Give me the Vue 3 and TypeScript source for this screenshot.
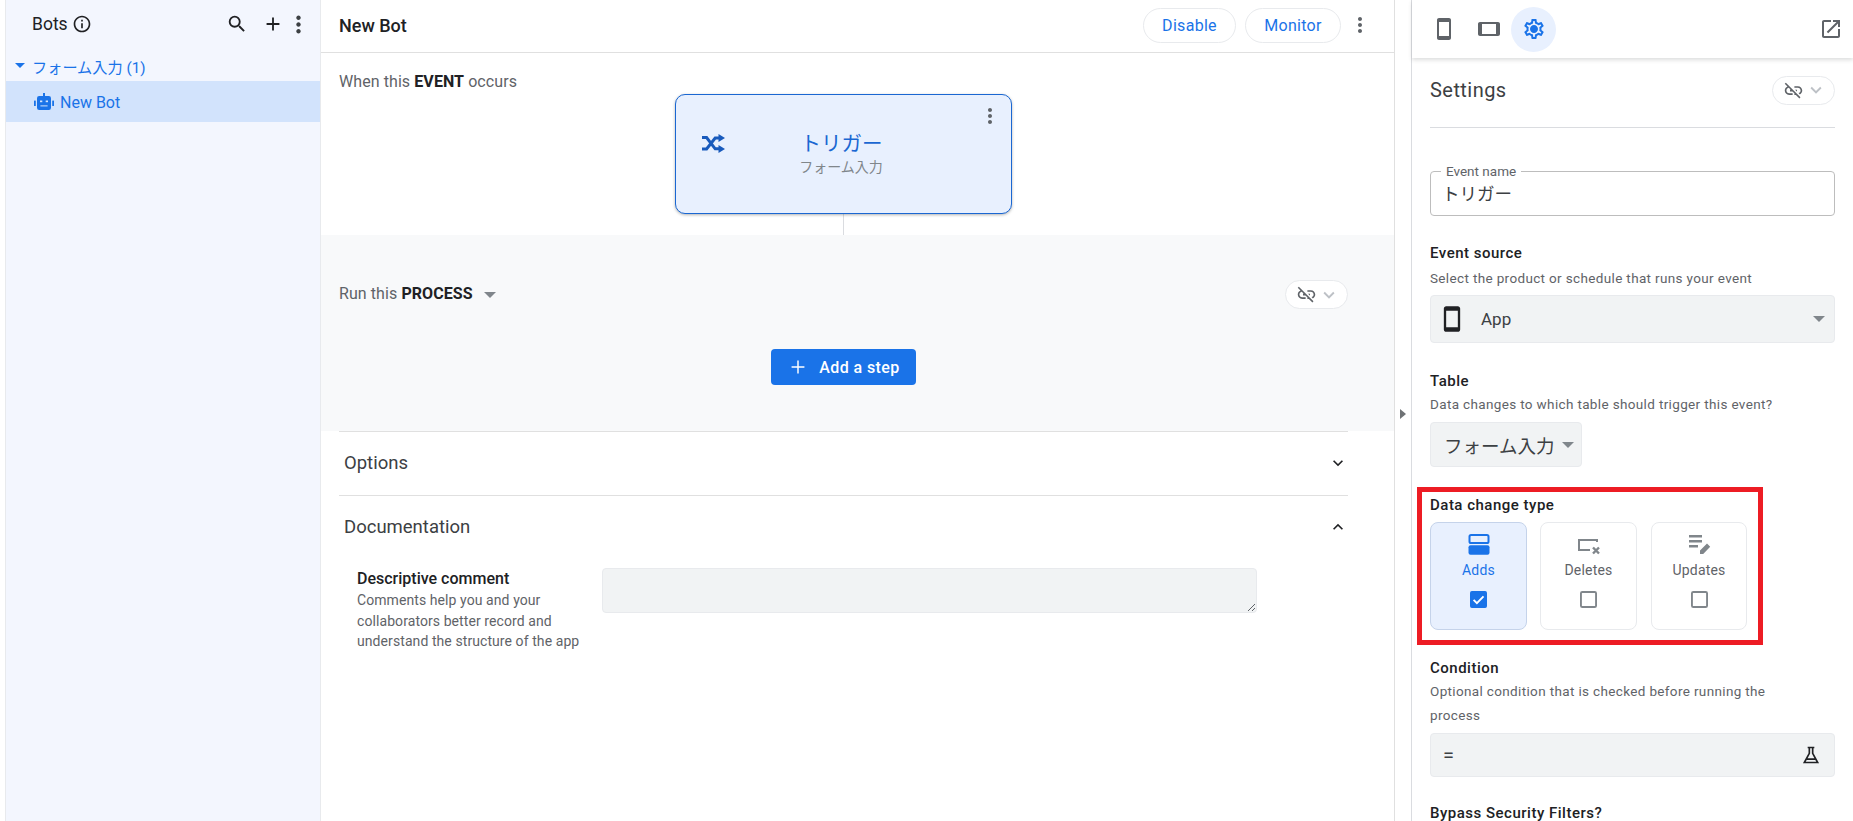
<script setup lang="ts">
const more = 'M12 8c1.1 0 2-.9 2-2s-.9-2-2-2-2 .9-2 2 .9 2 2 2zm0 2c-1.1 0-2 .9-2 2s.9 2 2 2 2-.9 2-2-.9-2-2-2zm0 6c-1.1 0-2 .9-2 2s.9 2 2 2 2-.9 2-2-.9-2-2-2z'
const phone = 'M17 1.01L7 1c-1.1 0-2 .9-2 2v18c0 1.1.9 2 2 2h10c1.1 0 2-.9 2-2V3c0-1.1-.9-1.99-2-1.99zM17 19H7V5h10v14z'
const linkOff = 'M17 7h-4v1.9h4c1.71 0 3.1 1.39 3.1 3.1 0 1.43-.98 2.63-2.31 2.98l1.46 1.46C20.88 15.61 22 13.95 22 12c0-2.76-2.24-5-5-5zm-1 4h-2.19l2 2H16zM2 4.27l3.11 3.11C3.29 8.12 2 9.91 2 12c0 2.76 2.24 5 5 5h4v-1.9H7c-1.71 0-3.1-1.39-3.1-3.1 0-1.59 1.21-2.9 2.76-3.07L8.73 11H8v2h2.73L13 15.27V17h1.73l4.01 4L20 19.74 3.27 3 2 4.27z'
const expandMore = 'M16.59 8.59L12 13.17 7.41 8.59 6 10l6 6 6-6z'
const expandLess = 'M12 8l-6 6 1.41 1.41L12 10.83l4.59 4.58L18 14z'
const gear = 'M19.43 12.98c.04-.32.07-.64.07-.98 0-.34-.03-.66-.07-.98l2.11-1.65c.19-.15.24-.42.12-.64l-2-3.46c-.09-.16-.26-.25-.44-.25-.06 0-.12.01-.17.03l-2.49 1c-.52-.4-1.08-.73-1.69-.98l-.38-2.65C14.46 2.18 14.25 2 14 2h-4c-.25 0-.46.18-.49.42l-.38 2.65c-.61.25-1.17.59-1.69.98l-2.49-1c-.06-.02-.12-.03-.18-.03-.17 0-.34.09-.43.25l-2 3.46c-.13.22-.07.49.12.64l2.11 1.65c-.04.32-.07.65-.07.98 0 .33.03.66.07.98l-2.11 1.65c-.19.15-.24.42-.12.64l2 3.46c.09.16.26.25.44.25.06 0 .12-.01.17-.03l2.49-1c.52.4 1.08.73 1.69.98l.38 2.65c.03.24.24.42.49.42h4c.25 0 .46-.18.49-.42l.38-2.65c.61-.25 1.17-.59 1.69-.98l2.49 1c.06.02.12.03.18.03.17 0 .34-.09.43-.25l2-3.46c.12-.22.07-.49-.12-.64l-2.11-1.65zm-1.98-1.71c.04.31.05.52.05.73 0 .21-.02.43-.05.73l-.14 1.13.89.7 1.08.84-.7 1.21-1.27-.51-1.04-.42-.9.68c-.43.32-.84.56-1.25.73l-1.06.43-.16 1.13-.2 1.35h-1.4l-.19-1.35-.16-1.13-1.06-.43c-.43-.18-.83-.41-1.23-.71l-.91-.7-1.06.43-1.27.51-.7-1.21 1.08-.84.89-.7-.14-1.13c-.03-.31-.05-.54-.05-.74s.02-.43.05-.73l.14-1.13-.89-.7-1.08-.84.7-1.21 1.27.51 1.04.42.9-.68c.43-.32.84-.56 1.25-.73l1.06-.43.16-1.13.2-1.35h1.39l.19 1.35.16 1.13 1.06.43c.43.18.83.41 1.23.71l.91.7 1.06-.43 1.27-.51.7 1.21-1.07.85-.89.7.14 1.13zM12 8c-2.21 0-4 1.79-4 4s1.79 4 4 4 4-1.79 4-4-1.79-4-4-4z'
</script>

<template>
  <div class="page">
    <aside class="side">
      <div class="side-head">
        <span class="side-title">Bots</span>
        <svg class="ic-info" viewBox="0 0 24 24"><path d="M11 7h2v2h-2zm0 4h2v6h-2zm1-9C6.48 2 2 6.48 2 12s4.48 10 10 10 10-4.48 10-10S17.52 2 12 2zm0 18c-4.41 0-8-3.59-8-8s3.59-8 8-8 8 3.59 8 8-3.59 8-8 8z"/></svg>
        <span class="grow"></span>
        <svg class="ic-search" viewBox="0 0 24 24"><path d="M15.5 14h-.79l-.28-.27A6.471 6.471 0 0 0 16 9.5 6.5 6.5 0 1 0 9.5 16c1.61 0 3.09-.59 4.23-1.57l.27.28v.79l5 4.99L20.49 19l-4.99-5zm-6 0C7.01 14 5 11.99 5 9.5S7.01 5 9.5 5 14 7.01 14 9.5 11.99 14 9.5 14z"/></svg>
        <svg class="ic-add" viewBox="0 0 24 24"><path d="M19 13h-6v6h-2v-6H5v-2h6V5h2v6h6v2z"/></svg>
        <svg class="ic-more dark" viewBox="0 0 24 24"><path :d="more"/></svg>
      </div>
      <div class="group"><span class="tri blue"></span><span>フォーム入力 (1)</span></div>
      <div class="bot-row">
        <svg class="ic-bot" viewBox="0 0 20 17">
          <rect x="9" y="0" width="2" height="3"/>
          <rect x="3" y="3" width="14" height="14" rx="2.2"/>
          <rect x="0" y="7.5" width="1.8" height="5.5" rx=".5"/>
          <rect x="18.2" y="7.5" width="1.8" height="5.5" rx=".5"/>
          <rect x="6" y="7.5" width="2.3" height="1.7" fill="#d2e3fc"/>
          <rect x="11.7" y="7.5" width="2.3" height="1.7" fill="#d2e3fc"/>
          <rect x="6.4" y="12.4" width="7.2" height="1" fill="#d2e3fc"/>
        </svg>
        <span>New Bot</span>
      </div>
    </aside>

    <main class="main">
      <header class="main-head">
        <span class="main-title">New Bot</span>
        <span class="grow"></span>
        <button class="pill-btn disable">Disable</button>
        <button class="pill-btn monitor">Monitor</button>
        <svg class="ic-more grey head-more" viewBox="0 0 24 24"><path :d="more"/></svg>
      </header>

      <section class="event">
        <div class="step-label">When this <b>EVENT</b> occurs</div>
        <div class="card">
          <svg class="ic-shuffle" viewBox="0 0 23 19">
            <path d="M0 3.6h4.6l8.6 11.2h5M0 15h4.6l8.6-11h5" fill="none" stroke="currentColor" stroke-width="3"/>
            <path d="M16.5 0l6.5 4-6.5 4zM16.5 11l6.5 4-6.5 4z"/>
          </svg>
          <svg class="ic-more grey card-more" viewBox="0 0 24 24"><path :d="more"/></svg>
          <div class="card-title">トリガー</div>
          <div class="card-sub">フォーム入力</div>
        </div>
        <div class="connector"></div>
      </section>

      <section class="process">
        <div class="process-row">
          <div class="step-label run-label">Run this <b>PROCESS</b></div>
          <span class="tri grey process-tri"></span>
          <span class="grow"></span>
          <div class="link-pill compact">
            <svg class="ic-link" viewBox="0 0 24 24"><path :d="linkOff"/></svg>
            <svg class="ic-chev" viewBox="0 0 24 24"><path :d="expandMore"/></svg>
          </div>
        </div>
        <button class="add-step">
          <svg class="ic-plus" viewBox="0 0 24 24"><path d="M19 12.8h-6.2V19h-1.6v-6.2H5v-1.6h6.2V5h1.6v6.2H19z"/></svg>
          <span>Add a step</span>
        </button>
      </section>

      <div class="accordion">
        <div class="acc-row"><span>Options</span><svg viewBox="0 0 24 24"><path :d="expandMore"/></svg></div>
        <div class="acc-row"><span>Documentation</span><svg viewBox="0 0 24 24"><path :d="expandLess"/></svg></div>
        <div class="doc">
          <div class="doc-text">
            <div class="doc-title">Descriptive comment</div>
            <div class="doc-sub">Comments help you and your collaborators better record and understand the structure of the app</div>
          </div>
          <div class="doc-area">
            <svg class="grip" viewBox="0 0 10 10"><path d="M9 2L2 9M9 6L6 9" stroke="#5f6368" stroke-width="1" fill="none"/></svg>
          </div>
        </div>
      </div>
    </main>

    <div class="handle"><span class="handle-tri"></span></div>

    <section class="panel">
      <div class="tabs">
        <svg class="tab-ic" viewBox="0 0 24 24"><path :d="phone"/></svg>
        <svg class="tab-ic tablet" viewBox="0 0 24 24"><path :d="phone"/></svg>
        <div class="tab-active"><svg viewBox="0 0 24 24"><path :d="gear"/></svg></div>
        <span class="grow"></span>
        <svg class="tab-ic" viewBox="0 0 24 24"><path d="M19 19H5V5h7V3H5c-1.11 0-2 .9-2 2v14c0 1.1.89 2 2 2h14c1.1 0 2-.9 2-2v-7h-2v7zM14 3v2h3.59l-9.83 9.83 1.41 1.41L19 6.41V10h2V3h-7z"/></svg>
      </div>
      <div class="panel-body">
        <div class="settings-row">
          <span class="settings-title">Settings</span>
          <div class="link-pill">
            <svg class="ic-link" viewBox="0 0 24 24"><path :d="linkOff"/></svg>
            <svg class="ic-chev" viewBox="0 0 24 24"><path :d="expandMore"/></svg>
          </div>
        </div>
        <div class="name-field">
          <span class="float-label">Event name</span>
          <span class="name-value">トリガー</span>
        </div>

        <div class="f-label source-label">Event source</div>
        <div class="f-sub source-sub">Select the product or schedule that runs your event</div>
        <div class="select wide">
          <svg class="ic-phone" viewBox="0 0 24 24"><path :d="phone"/></svg>
          <span class="select-text">App</span>
          <span class="grow"></span>
          <span class="tri grey big"></span>
        </div>

        <div class="f-label table-label">Table</div>
        <div class="f-sub">Data changes to which table should trigger this event?</div>
        <div class="select narrow">
          <span class="select-jp">フォーム入力</span>
          <span class="tri grey big"></span>
        </div>

        <div class="f-label type-label">Data change type</div>
        <div class="type-grid">
          <div class="type on">
            <svg class="type-ic" viewBox="0 0 24 24"><rect x="2.5" y="2" width="19" height="8" rx="1.6" fill="none" stroke="currentColor" stroke-width="2"/><rect x="1.5" y="12.2" width="21" height="9.6" rx="2" fill="currentColor"/></svg>
            <span>Adds</span>
            <svg class="box" viewBox="0 0 18 18"><rect width="18" height="18" rx="2" fill="#1a73e8"/><path d="M3.8 9.4l3.5 3.4 7-7.2" fill="none" stroke="#fff" stroke-width="2"/></svg>
          </div>
          <div class="type">
            <svg class="type-ic" viewBox="0 0 24 24"><path d="M20 9V7H2v10h11" fill="none" stroke="currentColor" stroke-width="2"/><path d="M16 14.5l6 6M22 14.5l-6 6" fill="none" stroke="currentColor" stroke-width="2.4"/></svg>
            <span>Deletes</span>
            <svg class="box" viewBox="0 0 18 18"><rect x="1" y="1" width="16" height="16" rx="1.5" fill="none" stroke="#80868b" stroke-width="2"/></svg>
          </div>
          <div class="type">
            <svg class="type-ic" viewBox="0 0 24 24"><path d="M2 2h13v2.4H2zM2 7h13v2.4H2zM2 12h9v2.4H2zM13 21v-3.4l7-7 3.2 3.2-7 7.2z"/></svg>
            <span>Updates</span>
            <svg class="box" viewBox="0 0 18 18"><rect x="1" y="1" width="16" height="16" rx="1.5" fill="none" stroke="#80868b" stroke-width="2"/></svg>
          </div>
        </div>

        <div class="f-label cond-label">Condition</div>
        <div class="f-sub">Optional condition that is checked before running the<br>process</div>
        <div class="cond">
          <span class="eq">=</span>
          <span class="grow"></span>
          <svg class="ic-flask" viewBox="0 0 24 24"><path d="M8 3h8M10 3v7L4 21h16l-6-11V3M7 17h10" fill="none" stroke="#202124" stroke-width="2"/></svg>
        </div>

        <div class="f-label bypass-label">Bypass Security Filters?</div>
      </div>
      <div class="red-box"></div>
    </section>
  </div>
</template>

<style scoped>
.page { display: flex; width: 1853px; height: 821px; overflow: hidden; background: #fff; color: #202124; font-family: Roboto, "Noto Sans CJK JP", sans-serif; position: relative; }
.grow { flex: 1; }
svg { display: block; flex: none; fill: currentColor; }
button { font-family: inherit; cursor: pointer; }

.side { width: 316px; margin-left: 5px; flex: none; background: #f3f6fe; border-left: 1px solid #e8eaed; border-right: 1px solid #e8eaed; box-sizing: border-box; }
.side-head { display: flex; align-items: center; height: 48px; margin-bottom: 4px; padding: 0 13px 0 26px; color: #202124; box-sizing: border-box; }
.side-title { font-size: 17.5px; color: #202124; }
.ic-info { width: 20px; height: 20px; margin-left: 4px; }
.ic-search { width: 22px; height: 22px; margin-right: 14px; }
.ic-add { width: 22px; height: 22px; margin-right: 1px; }
.ic-more { width: 24px; height: 24px; }
.dark { color: #3c4043; width: 27px; height: 27px; margin-right: -5px; }
.grey { color: #5f6368; }
.group { display: flex; align-items: center; height: 29px; padding: 0 0 2px 9px; box-sizing: border-box; font-size: 15.2px; color: #1a73e8; }
.tri { display: inline-block; width: 0; height: 0; border-left: 5px solid transparent; border-right: 5px solid transparent; border-top: 5px solid #80868b; }
.tri.big { border-left-width: 6px; border-right-width: 6px; border-top-width: 6px; }
.tri.blue { border-top-color: #1a73e8; margin-right: 7px; }
.bot-row { display: flex; align-items: center; height: 41px; padding: 1px 0 0 28px; box-sizing: border-box; background: #d2e3fc; color: #1a73e8; font-size: 16px; }
.ic-bot { width: 20px; height: 17px; margin-right: 6px; margin-top: -2px; }

.main { width: 1073px; flex: none; display: flex; flex-direction: column; }
.main-head { display: flex; align-items: center; height: 53px; padding: 0 18px 2px; box-sizing: border-box; border-bottom: 1px solid #e0e0e0; flex: none; }
.main-title { font-size: 18px; font-weight: 500; color: #202124; }
.pill-btn { height: 35px; border-radius: 18px; background: #fff; border: 1px solid #e8eaed; color: #1a73e8; font-size: 16px; letter-spacing: .3px; padding: 0; }
.disable { width: 93px; margin-right: 9px; }
.monitor { width: 96px; }
.head-more { margin: 0 4px 0 7px; }

.event { height: 182px; padding: 19px 46px 0 18px; display: flex; flex-direction: column; box-sizing: border-box; flex: none; }
.step-label { font-size: 16px; letter-spacing: .08px; color: #5f6368; line-height: 20px; }
.step-label b { color: #202124; font-weight: 700; }
.run-label { margin-top: -2px; }
.card { position: relative; align-self: center; width: 337px; height: 120px; margin-top: 2px; background: #e8f0fe; border: 1px solid #1a67d2; border-radius: 10px; box-sizing: border-box; box-shadow: 0 1px 3px rgba(60,64,67,.4); text-align: center; flex: none; }
.ic-shuffle { position: absolute; left: 26px; top: 39px; width: 23px; height: 19px; color: #185abc; }
.card-more { position: absolute; right: 9px; top: 9px; }
.card-title { margin-top: 37px; font-size: 20.5px; line-height: 24px; color: #1a67d2; margin-left: -4px; }
.card-sub { margin-top: 2px; font-size: 14px; line-height: 18px; color: #80868b; margin-left: -5px; }
.connector { width: 1px; flex: 1; background: #dadce0; align-self: center; }

.process { height: 196px; background: #f8f9fa; padding: 45px 46px 0 18px; display: flex; flex-direction: column; box-sizing: border-box; flex: none; }
.process-row { display: flex; align-items: center; height: 29px; }
.process-tri { margin-left: 11px; border-left-width: 6px; border-right-width: 6px; border-top-width: 6px; }
.link-pill { display: flex; align-items: center; justify-content: center; width: 63px; height: 29px; background: #fff; border: 1px solid #e8eaed; border-radius: 15px; box-sizing: border-box; gap: 1px; }
.ic-link { width: 21px; height: 21px; color: #5f6368; }
.ic-chev { width: 22px; height: 22px; color: #bdc1c6; margin-right: -2px; }
.add-step { display: flex; align-items: center; align-self: center; justify-content: center; gap: 10px; width: 145px; height: 36px; margin-top: 40px; padding: 0 0 0 0; background: #1a73e8; border: 0; border-radius: 4px; color: #fff; font-size: 16px; font-weight: 500; letter-spacing: .4px; flex: none; }
.ic-plus { width: 22px; height: 22px; }

.accordion { padding: 0 46px 0 18px; }
.acc-row { display: flex; align-items: center; justify-content: space-between; height: 64px; padding: 0 0 2px 5px; border-top: 1px solid #e0e0e0; box-sizing: border-box; font-size: 18.5px; color: #3c4043; }
.acc-row svg { width: 20px; height: 20px; color: #202124; }
.doc { display: flex; padding: 9px 0 0 18px; }
.doc-text { width: 245px; flex: none; }
.doc-title { font-size: 16px; font-weight: 500; line-height: 22px; color: #202124; }
.doc-sub { font-size: 14px; letter-spacing: .08px; line-height: 20.5px; color: #5f6368; width: 235px; }
.doc-area { position: relative; width: 655px; height: 45px; background: #f1f3f4; border: 1px solid #e8eaed; border-radius: 4px; box-sizing: border-box; }
.grip { position: absolute; right: 0; bottom: 0; width: 10px; height: 10px; }

.handle { width: 18px; flex: none; box-sizing: border-box; border-left: 1px solid #e0e0e0; border-right: 1px solid #dadce0; display: flex; align-items: center; justify-content: center; height: 821px; padding-top: 6px; }
.handle-tri { width: 0; height: 0; border-top: 5px solid transparent; border-bottom: 5px solid transparent; border-left: 6px solid #6f7275; }

.panel { flex: 1; display: flex; flex-direction: column; min-width: 0; }
.tabs { display: flex; align-items: center; height: 58px; padding: 0 10px 0 20px; box-shadow: 0 2px 4px rgba(60,64,67,.18); flex: none; color: #5f6368; position: relative; }
.tab-ic { width: 24px; height: 24px; color: #5f6368; }
.tablet { transform: rotate(90deg); margin-left: 21px; }
.tab-active { width: 45px; height: 45px; border-radius: 50%; background: #e8f0fe; color: #1a73e8; display: flex; align-items: center; justify-content: center; margin-left: 10px; }
.tab-active svg { width: 24px; height: 24px; }
.panel-body { padding: 17px 18px 0 18px; }
.settings-row { display: flex; align-items: center; justify-content: space-between; height: 30px; padding-bottom: 22px; border-bottom: 1px solid #dadce0; }
.settings-title { font-size: 20px; color: #3c4043; letter-spacing: .45px; }
.name-field { position: relative; height: 45px; margin-top: 43px; border: 1px solid #bdbdbd; border-radius: 4px; box-sizing: border-box; display: flex; align-items: center; padding: 0 11px 3px; }
.float-label { position: absolute; left: 10px; top: -8px; background: #fff; padding: 0 5px; font-size: 13.5px; line-height: 15px; color: #5f6368; }
.name-value { font-size: 17.5px; color: #3c4043; }
.f-label { font-size: 15px; font-weight: 500; letter-spacing: .5px; line-height: 20px; color: #202124; }
.f-sub { margin-top: 1px; font-size: 13.5px; letter-spacing: .35px; line-height: 24px; color: #5f6368; }
.source-label { margin-top: 27px; }
.source-sub { margin-top: 3px; }
.select { display: flex; align-items: center; background: #f1f3f4; border: 1px solid #e8eaed; border-radius: 4px; box-sizing: border-box; }
.wide { height: 48px; margin-top: 5px; padding: 0 9px 0 7px; }
.ic-phone { width: 28px; height: 28px; color: #202124; }
.select-text { margin-left: 15px; font-size: 17px; color: #3c4043; }
.narrow { width: 152px; height: 45px; margin-top: 6px; padding-left: 13px; gap: 8px; }
.select-jp { font-size: 18.5px; color: #3c4043; }
.table-label { margin-top: 28px; }
.type-label { margin-top: 28px; }
.type-grid { display: flex; gap: 13px; margin-top: 7px; }
.type { width: 97px; height: 108px; display: flex; flex-direction: column; align-items: center; background: #fff; border: 1px solid #e8eaed; border-radius: 8px; box-sizing: border-box; color: #80868b; font-size: 14px; padding-top: 10px; }
.type:last-child { width: 96px; margin-left: 1px; }
.type.on { background: #e8f0fe; border-color: #c5d3ea; color: #1a73e8; }
.type-ic { width: 24px; height: 24px; }
.type > span { color: #5f6368; margin-top: 3px; line-height: 20px; letter-spacing: .2px; }
.type.on > span { color: #1a73e8; }
.box { width: 17px; height: 17px; margin-top: 11px; }
.cond-label { margin-top: 28px; }
.cond { display: flex; align-items: center; height: 44px; margin-top: 6px; padding: 0 12px; background: #f1f3f4; border: 1px solid #e8eaed; border-radius: 4px; box-sizing: border-box; }
.eq { font-size: 20px; color: #3c4043; }
.ic-flask { width: 20px; height: 20px; margin-right: 1px; }
.bypass-label { margin-top: 26px; }
.red-box { position: absolute; left: 1417px; top: 487px; width: 346px; height: 158px; border: 5px solid #ed1c24; box-sizing: border-box; pointer-events: none; }
</style>
